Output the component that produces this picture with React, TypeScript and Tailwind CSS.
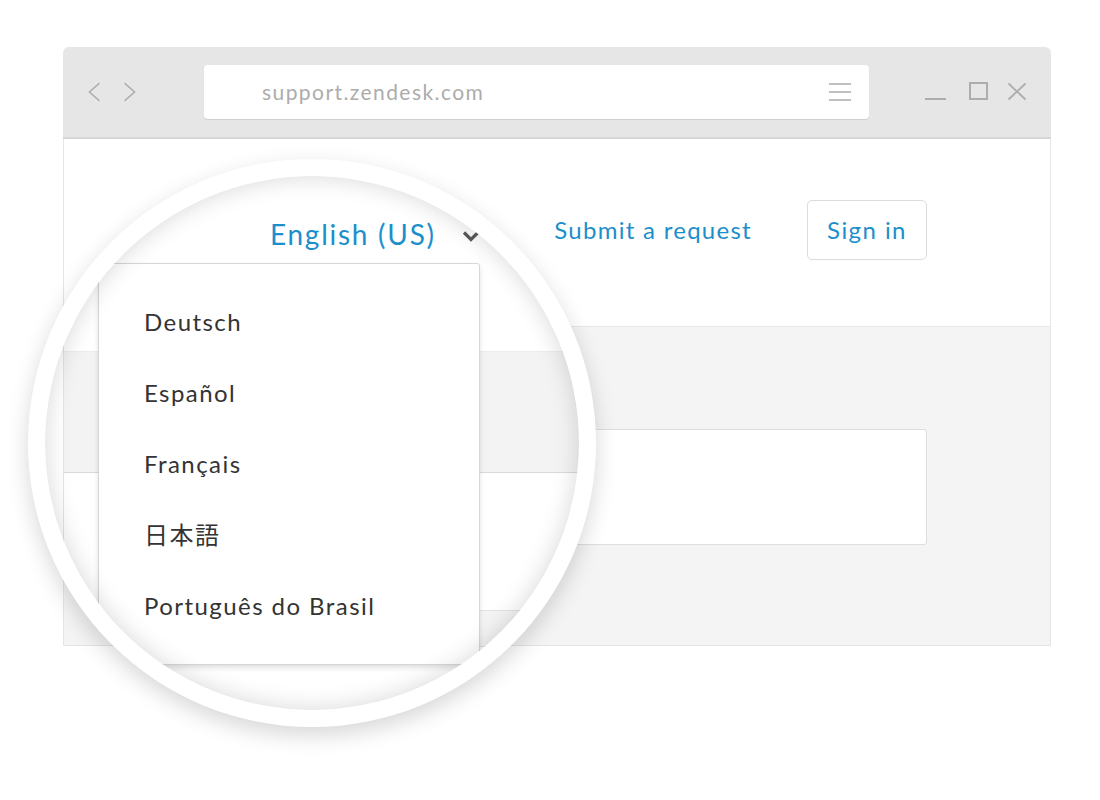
import React from "react";

const LANGUAGES = ["Deutsch", "Español", "Français", "日本語", "Português do Brasil"];

function NavChevron({ dir }: { dir: "left" | "right" }) {
  return (
    <svg width="13" height="20" viewBox="0 0 13 20" fill="none" className="text-[#adadad]">
      <path
        d={dir === "left" ? "M11.5 1 L1.5 10 L11.5 19" : "M1.5 1 L11.5 10 L1.5 19"}
        stroke="currentColor"
        strokeWidth="1.6"
      />
    </svg>
  );
}

function WindowControls() {
  return (
    <svg width="102" height="20" viewBox="0 0 102 20" fill="none" className="ml-[56px] text-[#adadad]">
      <path d="M0 17 H21" stroke="currentColor" strokeWidth="2" />
      <rect x="45" y="1" width="17" height="16" stroke="currentColor" strokeWidth="2" />
      <path d="M83.5 1.5 L100.5 17.5 M100.5 1.5 L83.5 17.5" stroke="currentColor" strokeWidth="1.8" />
    </svg>
  );
}

function LanguageMenu() {
  return (
    <div className="absolute left-[34px] top-[87px] w-[382px] rounded-[3px] border-[1.5px] border-[#d6d6d6] bg-white pb-[23px] pt-[22px] shadow-[0_3px_5px_rgba(0,0,0,0.12)]">
      {LANGUAGES.map((lang) => (
        <div key={lang} className="flex h-[71px] items-center pl-[45px] text-[24px] tracking-[0.06em] text-[#333333]">
          {lang}
        </div>
      ))}
    </div>
  );
}

function Magnifier() {
  // the lens sits over the page; centre ~ (312, 443)
  return (
    <div className="absolute left-[28px] top-[159px] h-[568px] w-[568px] rounded-full bg-white p-[17px] shadow-[0_8px_22px_rgba(0,0,0,0.16)]">
      <div className="relative h-full w-full overflow-hidden rounded-full bg-white">
        {/* magnified page */}
        <div className="relative ml-[18px] flex flex-col border-l border-[#e4e4e4]">
          <div className="flex h-[175px] items-start pl-[206px] pt-[38px]">
            <span className="text-[28px] leading-[40px] tracking-[0.062em] text-[#1c8fcb]">English (US)</span>
            <svg width="18" height="13" viewBox="0 0 18 13" fill="none" className="ml-[26px] mt-[16px] text-[#5a5a5a]">
              <path d="M2 2.5 L9 9.5 L16 2.5" stroke="currentColor" strokeWidth="3.2" />
            </svg>
            <span className="ml-[17px] mt-[12px] h-[2px] w-[2px] rounded-full bg-[#555]" />
          </div>
          <div className="h-[122px] border-y border-t-[#ececec] border-b-[#d9d9d9] bg-[#f3f3f3]" />
          <div className="h-[137px] bg-white" />
          <div className="h-[37px] border-y border-[#e2e2e2] bg-[#f4f4f4]" />
          <LanguageMenu />
        </div>

        {/* inner shading of the glass */}
        <div className="pointer-events-none absolute inset-0 rounded-full shadow-[inset_0_0_24px_rgba(0,0,0,0.16)]" />
      </div>
    </div>
  );
}

export default function App() {
  return (
    <div className="relative h-[800px] w-[1100px] overflow-hidden bg-white font-[Lato,'Noto_Sans_CJK_JP',sans-serif]">
      <div className="pl-[63px] pt-[47px]">
        <div className="w-[988px]">
          {/* browser chrome */}
          <div className="flex h-[92px] items-center rounded-t-[6px] border-b-2 border-[#d6d6d6] bg-[#e6e6e6] pl-[25px]">
            <NavChevron dir="left" />
            <div className="ml-[22px]">
              <NavChevron dir="right" />
            </div>
            <div className="ml-[68px] flex h-[54px] w-[665px] items-center justify-between rounded-[4px] bg-white pl-[58px] pr-[18px] shadow-[0_1px_1px_rgba(0,0,0,0.1)]">
              <span className="text-[21px] tracking-[0.068em] text-[#acacac]">support.zendesk.com</span>
              <svg width="22" height="20" viewBox="0 0 22 20" fill="none" className="text-[#acacac]">
                <path d="M0 2 H22 M0 10 H22 M0 18 H22" stroke="currentColor" strokeWidth="1.6" />
              </svg>
            </div>
            <WindowControls />
          </div>

          {/* page */}
          <div className="border-x border-[#e6e6e6]">
            <div className="flex h-[188px] items-center justify-end border-b border-[#e6e6e6] bg-white pb-[5px] pr-[123px]">
              <a className="text-[24px] tracking-[0.053em] text-[#1c8fcb]">Submit a request</a>
              <button className="ml-[55px] flex h-[60px] w-[120px] items-center justify-center rounded-[5px] border-[1.5px] border-[#dcdcdc] bg-white text-[24px] tracking-[0.06em] text-[#1c8fcb]">
                Sign in
              </button>
            </div>
            <div className="h-[319px] border-b border-[#e4e4e4] bg-[#f4f4f4] pt-[102px]">
              <div className="mx-[123px] h-[116px] rounded-[3px] border-[1.5px] border-[#dedede] bg-white" />
            </div>
          </div>
        </div>
      </div>

      <Magnifier />
    </div>
  );
}
